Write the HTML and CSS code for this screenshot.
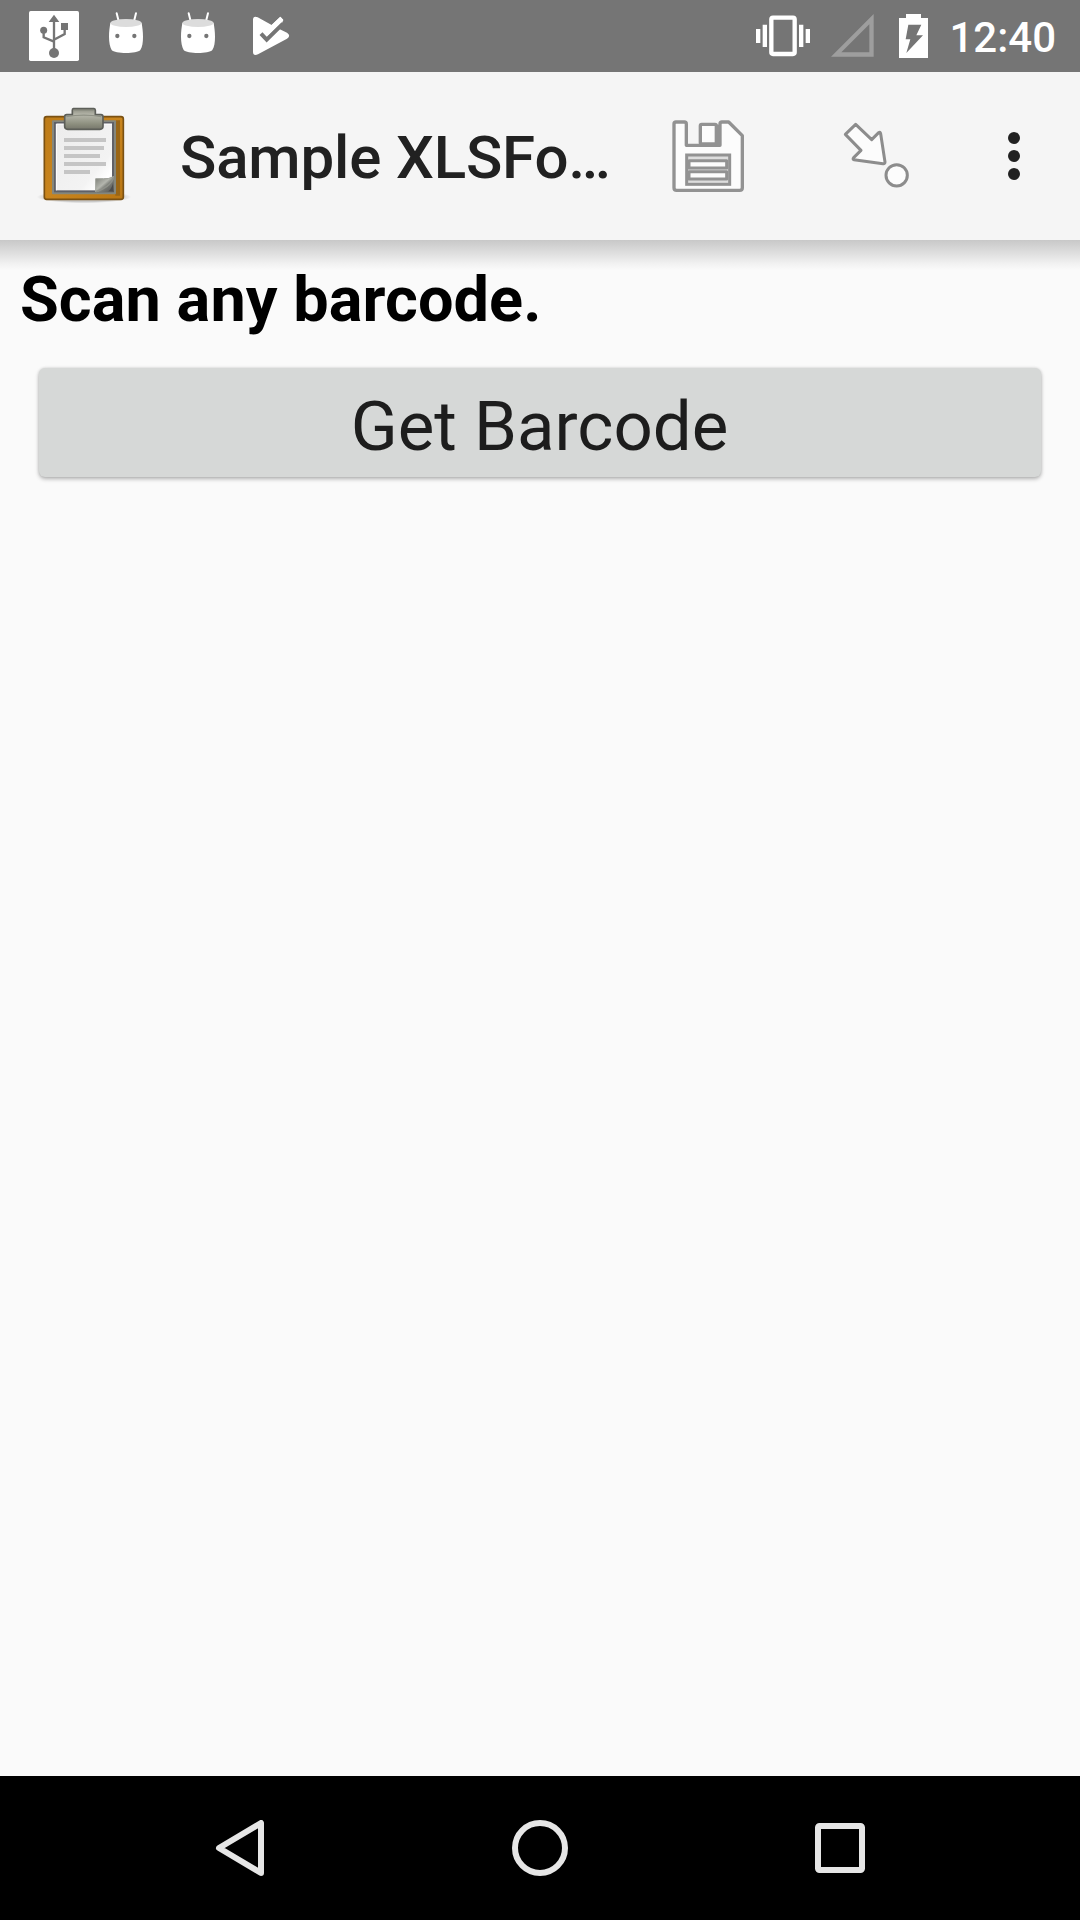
FILE: index.html
```html
<!DOCTYPE html>
<html lang="en">
<head>
<meta charset="utf-8">
<title>Sample XLSForm</title>
<link rel="stylesheet" href="styles.css">
</head>
<body>
<div class="screen">
  <header class="status">
    <div class="notifications">
      <svg width="50" height="50" viewBox="87 33 150 150">
        <rect x="87" y="33" width="150" height="150" rx="5" fill="#fff"/>
        <g fill="#757575"><circle cx="162" cy="159" r="15"/><circle cx="131" cy="91" r="10.500"/><path d="M162 44l16 22h-32zM183 69h21v21h-21z"/></g>
        <path d="M162 62v90M131 92v20l31 13M194 86v16l-32 17" fill="none" stroke="#757575" stroke-width="7"/>
      </svg>
      <svg width="34" height="42" viewBox="327 36 102 126">
        <path d="M350 40l6 24M408 40l-6 24" stroke="#fff" stroke-width="6" stroke-linecap="round"/>
        <path d="M331 69C329 82 327 94 327 110C327 127 330 141 335 150C344 162 412 162 421 150C427 141 429 127 429 110C429 94 427 82 425 69Z" fill="#fff"/>
        <ellipse cx="378" cy="69" rx="47" ry="12" fill="#dcdcdc"/>
        <g fill="#757575"><circle cx="352" cy="108" r="6.500"/><circle cx="403" cy="108" r="6.500"/></g>
      </svg>
      <svg width="34" height="42" viewBox="327 36 102 126">
        <path d="M350 40l6 24M408 40l-6 24" stroke="#fff" stroke-width="6" stroke-linecap="round"/>
        <path d="M331 69C329 82 327 94 327 110C327 127 330 141 335 150C344 162 412 162 421 150C427 141 429 127 429 110C429 94 427 82 425 69Z" fill="#fff"/>
        <ellipse cx="378" cy="69" rx="47" ry="12" fill="#dcdcdc"/>
        <g fill="#757575"><circle cx="352" cy="108" r="6.500"/><circle cx="403" cy="108" r="6.500"/></g>
      </svg>
      <svg class="check" width="38" height="40" viewBox="756 48 114 120">
        <path d="M759 60Q759 47 773 52L815 75L841 50L850 60L838 87L861 98Q874 107 861 116L774 163Q759 169 759 155Z" fill="#fff"/>
        <path d="M783 101l17 18l49-48" fill="none" stroke="#757575" stroke-width="12"/>
        <path d="M814 76L841 50L850 60L801 108Z" fill="#fff"/>
      </svg>
    </div>
    <div class="system">
      <svg width="54" height="42" viewBox="48 45 162 126">
        <rect x="94" y="53" width="70" height="109" rx="5" fill="none" stroke="#fff" stroke-width="13"/>
        <path d="M48 87h13v42H48zM68 74h13v67H68zM177 74h13v67h-13zM197 87h13v42h-13z" fill="#fff"/>
      </svg>
      <svg class="signal" width="43" height="43" viewBox="274 43 129 129">
        <path d="M274 171L402 43V171ZM305 158H389V74Z" fill="#9e9e9e" fill-rule="evenodd"/>
      </svg>
      <svg class="battery" width="29" height="44" viewBox="477 42 87 132">
        <path d="M477 54h21V42h45v12h21v120h-87z" fill="#fff"/>
        <path d="M505 74h39l-15 32h20l-50 53l12-41h-14z" fill="#757575"/>
      </svg>
      <span class="clock">12:40</span>
    </div>
  </header>

  <div class="appbar">
    <svg class="clipboard" width="110" height="120" viewBox="0 0 330 360">
      <defs>
        <linearGradient id="wood" x2="1" y2="1"><stop offset="0" stop-color="#bd7b17"/><stop offset=".5" stop-color="#c9851e"/><stop offset="1" stop-color="#b97613"/></linearGradient>
        <linearGradient id="paper" x2="1" y2="1"><stop offset="0" stop-color="#ececec"/><stop offset=".7" stop-color="#f3f3f3"/><stop offset=".85" stop-color="#fff"/><stop offset="1" stop-color="#ddd"/></linearGradient>
        <linearGradient id="metal" x2="0" y2="1"><stop offset="0" stop-color="#8c8d80"/><stop offset=".3" stop-color="#b6b7ab"/><stop offset=".75" stop-color="#8c8e7e"/><stop offset="1" stop-color="#76776b"/></linearGradient>
        <linearGradient id="curl" x2="1" y2="1"><stop offset="0" stop-color="#777972"/><stop offset=".45" stop-color="#b4b6ae"/><stop offset=".6" stop-color="#7a7c76"/><stop offset="1" stop-color="#555"/></linearGradient>
        <radialGradient id="ground"><stop offset=".75" stop-color="#000" stop-opacity=".18"/><stop offset="1" stop-color="#000" stop-opacity="0"/></radialGradient>
      </defs>
      <ellipse cx="162" cy="306" rx="142" ry="19" fill="url(#ground)"/>
      <rect x="43" y="65" width="237" height="248" rx="7" fill="url(#wood)" stroke="#7b5112" stroke-width="5"/>
      <path d="M258 76h12v226h-14z" fill="#9a6616"/>
      <rect x="66" y="76" width="192" height="222" rx="3" fill="#85877d"/>
      <rect x="75" y="84" width="174" height="205" fill="url(#paper)" stroke="#606167" stroke-width="6"/>
      <path d="M79 286V87H246" fill="none" stroke="#fff" stroke-width="3"/>
      <path d="M102 129h126v12H102zM102 153h120v12H102zM102 177h108v12H102zM102 201h126v12H102zM102 225h78v12H102z" fill="#c5c5c5"/>
      <path d="M197 291V251H219Q236 253 252 244V291Z" fill="url(#curl)"/>
      <path d="M198 290C219 285 247 268 250 246" fill="none" stroke="#8e9089" stroke-width="5"/>
      <path d="M197 291V251H220Q235 253 251 245" fill="none" stroke="#a1a39c" stroke-width="3"/>
      <path d="M235 289Q247 278 249 263V289Z" fill="#4c4c4c"/>
      <path d="M130 41H192Q196 41 196 46V59H213Q219 59 219 66V94Q219 103 210 103H113Q104 103 104 94V66Q104 59 110 59H127V46Q127 41 130 41Z" fill="url(#metal)" stroke="#5d5f59" stroke-width="5"/>
      <path d="M131 46H191M109 65Q161 56 214 65" fill="none" stroke="#8e9084" stroke-width="4"/>
    </svg>
    <h1 class="title">Sample XLSFo…</h1>
    <svg class="save" width="110" height="110" viewBox="0 0 330 330">
      <g fill="#fcfcfc" stroke="#929292" stroke-width="10" stroke-linejoin="round">
        <path d="M78 66H103Q109 66 109 72V136H210V72Q210 66 216 66H236L277 107V263Q277 271 269 271H80Q72 271 72 263V72Q72 66 78 66Z"/>
        <rect x="151" y="73" width="48" height="59" rx="4"/>
        <path d="M205 74V134"/>
        <rect x="110" y="165" width="129" height="88" fill="#ddd" stroke-width="9" stroke-linejoin="miter"/>
        <rect x="117" y="182" width="113" height="22" stroke-width="9"/>
        <rect x="117" y="215" width="113" height="22" stroke-width="9"/>
      </g>
    </svg>
    <svg class="jump" width="110" height="110" viewBox="0 0 330 330">
      <g fill="#fcfcfc" stroke="#8c8c8c" stroke-width="9" stroke-linejoin="round">
        <path d="M76 103L107 73L155 119L176 98Q181 94 182 101L195 186Q195 192 189 191L102 179Q97 178 101 173L123 151Z"/>
        <circle cx="230" cy="226" r="32"/>
      </g>
    </svg>
    <svg class="more" width="12" height="48" viewBox="0 0 12 48" fill="#212121"><circle cx="6" cy="6" r="6"/><circle cx="6" cy="24" r="6"/><circle cx="6" cy="42" r="6"/></svg>
  </div>

  <main class="content">
    <h2 class="question">Scan any barcode.</h2>
    <button class="scan">Get Barcode</button>
  </main>

  <nav class="navbar">
    <svg width="56" height="56" viewBox="0 0 56 56"><path d="M49 3V53L7 28Z"/></svg>
    <svg width="56" height="56" viewBox="0 0 56 56"><circle cx="28" cy="28" r="25"/></svg>
    <svg width="56" height="56" viewBox="0 0 56 56"><rect x="6" y="6" width="44" height="44" rx="1.500"/></svg>
  </nav>
</div>
</body>
</html>
```

FILE: styles.css
```css
* { box-sizing: border-box; }
body { margin: 0; font-family: Roboto, "Liberation Sans", sans-serif; }
svg { display: block; flex: none; }
h1, h2 { margin: 0; white-space: nowrap; }

.screen {
  width: 1080px;
  height: 1920px;
  display: flex;
  flex-direction: column;
  background: #fafafa;
  overflow: hidden;
}

.status {
  height: 72px;
  flex: none;
  display: flex;
  justify-content: space-between;
  align-items: flex-start;
  padding: 11px 24px 0 29px;
  background: #757575;
}
.notifications { display: flex; gap: 38px; padding-right: 8px; }
.notifications svg + svg { margin-top: 1px; }
.notifications svg:nth-child(2) { margin-left: -8px; }
.notifications .check { margin-left: -1px; margin-top: 5px; }
.system { display: flex; align-items: flex-start; }
.system > svg:first-child { margin-top: 4px; }
.signal { margin: 3px 0 0 21px; }
.battery { margin: 3px 0 0 25px; }
.clock {
  margin-left: 21px;
  font-size: 42px;
  font-weight: 500;
  line-height: 54px;
  color: #fff;
}

.appbar {
  height: 168px;
  flex: none;
  display: flex;
  align-items: flex-start;
  padding-left: 30px;
  background: #f5f5f5;
}
.clipboard { margin-top: 23px; }
.title {
  width: 470px;
  margin: 51px 0 0 40px;
  font-size: 60px;
  font-weight: 500;
  line-height: 70px;
  letter-spacing: -.15px;
  color: #212121;
}
.save { margin-top: 28px; }
.jump { margin: 28px 0 0 60px; }
.more { margin: 60px 0 0 78px; }

.content {
  flex: 1;
  padding: 24px 39px 0 20px;
  background: linear-gradient(#c8c8c8, #e0e0e0 14px, #f0f0f0 23px, #fafafa 30px);
}
.question {
  font-size: 63px;
  font-weight: 700;
  line-height: 72px;
  letter-spacing: .06px;
  color: #000;
}
.scan {
  display: block;
  width: 1002px;
  height: 109px;
  margin: 32px 0 0 19px;
  padding: 9px 1px 0 0;
  border: 0;
  border-radius: 6px;
  background: #d6d8d7;
  box-shadow: 0 2px 4px rgba(0, 0, 0, .28), 0 0 3px rgba(0, 0, 0, .12);
  font-family: inherit;
  font-size: 69px;
  line-height: 100px;
  color: #1d1d1d;
}

.navbar {
  height: 144px;
  flex: none;
  display: flex;
  justify-content: center;
  align-items: center;
  gap: 244px;
  background: #000;
}
.navbar svg {
  fill: none;
  stroke: #e6e6e6;
  stroke-width: 6;
  stroke-linejoin: round;
}
```
